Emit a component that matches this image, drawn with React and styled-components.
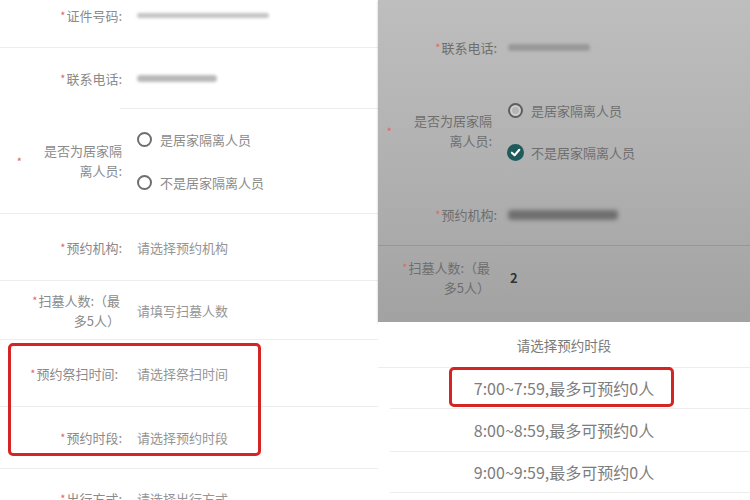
import React from 'react';
import styled, { createGlobalStyle } from 'styled-components';

const Global = createGlobalStyle`
  html, body { margin: 0; padding: 0; background: #fff; }
  body { font-family: "Noto Sans CJK SC", "Noto Sans", sans-serif; }
`;

const Page = styled.div`
  display: flex;
  width: 750px;
  height: 500px;
  overflow: hidden;
`;

const LeftPanel = styled.div`
  width: 378px;
  flex: none;
  background: #fff;
  display: flex;
  flex-direction: column;
`;

const RightPanel = styled.div`
  flex: 1;
  display: flex;
  flex-direction: column;
`;

const GrayForm = styled.div`
  height: 322px;
  flex: none;
  display: flex;
  flex-direction: column;
  background: linear-gradient(180deg, #bebebe 0%, #b0b0b0 55%, #a2a2a2 100%);
  box-shadow: 0 1px 2px rgba(0, 0, 0, 0.25);
`;

const Row = styled.div`
  display: flex;
  align-items: center;
  flex: none;
  box-sizing: border-box;
  height: ${(p) => p.$h}px;
  padding-bottom: ${(p) => p.$pb || 0}px;
`;

const Divider = styled.div`
  height: 1px;
  flex: none;
  margin-left: ${(p) => p.$indent || 0}px;
  background: ${(p) => p.$color || '#ededed'};
`;

const Label = styled.div`
  width: ${(p) => p.$w || 125}px;
  flex: none;
  box-sizing: border-box;
  padding-right: ${(p) => p.$pr || 3}px;
  display: flex;
  justify-content: flex-end;
  align-items: center;
  font-size: 13px;
  line-height: 20px;
  text-align: right;
  color: ${(p) => (p.$dim ? '#6e6e6e' : '#8a8a8a')};
`;

const LabelText = styled.span`
  max-width: ${(p) => p.$max || 99}px;
`;

const Star = styled.span`
  color: #e06666;
  font-size: 11px;
  margin-right: ${(p) => p.$gap || 1}px;
  vertical-align: 1px;
`;

const Value = styled.div`
  margin-left: ${(p) => p.$ml || 12}px;
  font-size: 13px;
  color: ${(p) => (p.$dark ? '#333' : '#959595')};
  font-weight: ${(p) => (p.$dark ? 700 : 400)};
  display: flex;
  align-items: center;
`;

const Redacted = styled.div`
  width: ${(p) => p.$w}px;
  height: ${(p) => p.$hh || 6}px;
  border-radius: 4px;
  background: ${(p) => p.$c};
  filter: blur(${(p) => p.$blur || 1.5}px);
`;

const RadioGroup = styled.div`
  margin-left: ${(p) => p.$ml || 12}px;
  display: flex;
  flex-direction: column;
  gap: ${(p) => p.$gap || 23}px;
`;

const RadioItem = styled.div`
  display: flex;
  align-items: center;
  gap: 8px;
  height: 20px;
  font-size: 13px;
  color: ${(p) => (p.$dim ? '#6e6e6e' : '#8a8a8a')};
`;

const RadioCircle = styled.span`
  width: 15px;
  height: 15px;
  box-sizing: border-box;
  border-radius: 50%;
  border: 2px solid ${(p) => p.$c || '#6f6f6f'};
  flex: none;
  ${(p) => p.$inner && `box-shadow: inset 0 0 0 2px #cfcfcf;`}
`;

const CheckedCircle = styled.span`
  width: 17px;
  height: 17px;
  border-radius: 50%;
  background: #1f5a5c;
  flex: none;
  display: flex;
  align-items: center;
  justify-content: center;
  margin-left: -1px;
  margin-right: -1px;
`;

const Group = styled.div`
  position: relative;
  display: flex;
  flex-direction: column;
`;

const Highlight = styled.div`
  position: absolute;
  left: ${(p) => p.$l}px;
  top: ${(p) => p.$t}px;
  width: ${(p) => p.$w}px;
  height: ${(p) => p.$h}px;
  box-sizing: border-box;
  border: ${(p) => p.$bw || 3}px solid #d42424;
  border-radius: 5px;
  pointer-events: none;
`;

const Picker = styled.div`
  flex: 1;
  background: #fff;
  display: flex;
  flex-direction: column;
`;

const PickerTitle = styled.div`
  height: 45px;
  flex: none;
  display: flex;
  align-items: center;
  justify-content: center;
  font-size: 13.5px;
  color: #7a7a7a;
`;

const Option = styled.div`
  position: relative;
  height: ${(p) => p.$h}px;
  flex: none;
  display: flex;
  align-items: center;
  justify-content: center;
  font-size: 16px;
  color: #7d7d7d;
`;

const Check = () => (
  <svg width="11" height="11" viewBox="0 0 12 12">
    <path d="M2 6.2 L5 9 L10.2 3" fill="none" stroke="#fff" strokeWidth="2.2" strokeLinecap="round" strokeLinejoin="round" />
  </svg>
);

export default function App() {
  return (
    <Page>
      <Global />
      <LeftPanel>
        <Row $h={47} $pb={17}>
          <Label><span><Star>*</Star>证件号码:</span></Label>
          <Value><Redacted $w={132} $hh={5} $c="#c4c4c4" /></Value>
        </Row>
        <Divider />
        <Row $h={60}>
          <Label><span><Star>*</Star>联系电话:</span></Label>
          <Value><Redacted $w={80} $hh={7} $c="#b9b9b9" /></Value>
        </Row>
        <Divider $indent={120} />
        <Row $h={104}>
          <Label>
            <Star $gap={14}>*</Star>
            <LabelText $max={86}>是否为居家隔离人员:</LabelText>
          </Label>
          <RadioGroup>
            <RadioItem><RadioCircle />是居家隔离人员</RadioItem>
            <RadioItem><RadioCircle />不是居家隔离人员</RadioItem>
          </RadioGroup>
        </Row>
        <Divider />
        <Row $h={66}>
          <Label><span><Star>*</Star>预约机构:</span></Label>
          <Value>请选择预约机构</Value>
        </Row>
        <Divider />
        <Row $h={58}>
          <Label $pr={5}><LabelText><Star>*</Star>扫墓人数:（最多5人）</LabelText></Label>
          <Value>请填写扫墓人数</Value>
        </Row>
        <Divider />
        <Group>
          <Row $h={66}>
            <Label $pr={7}><span><Star>*</Star>预约祭扫时间:</span></Label>
            <Value>请选择祭扫时间</Value>
          </Row>
          <Divider />
          <Row $h={61}>
            <Label><span><Star>*</Star>预约时段:</span></Label>
            <Value>请选择预约时段</Value>
          </Row>
          <Highlight $l={8} $t={3} $w={253} $h={113} $bw={3.5} />
        </Group>
        <Divider />
        <Row $h={58}>
          <Label><span><Star>*</Star>出行方式:</span></Label>
          <Value>请选择出行方式</Value>
        </Row>
      </LeftPanel>

      <RightPanel>
        <GrayForm>
          <Row $h={94}>
            <Label $w={122} $dim><span><Star>*</Star>联系电话:</span></Label>
            <Value $ml={8}><Redacted $w={82} $hh={7} $c="#999999" /></Value>
          </Row>
          <Row $h={90} $pb={16}>
            <Label $w={122} $dim $pr={8}>
              <Star $gap={14}>*</Star>
              <LabelText $max={86}>是否为居家隔离人员:</LabelText>
            </Label>
            <RadioGroup $ml={8} $gap={22}>
              <RadioItem $dim><RadioCircle $c="#5e5e5e" $inner />是居家隔离人员</RadioItem>
              <RadioItem $dim><CheckedCircle><Check /></CheckedCircle>不是居家隔离人员</RadioItem>
            </RadioGroup>
          </Row>
          <Row $h={61}>
            <Label $w={122} $dim><span><Star>*</Star>预约机构:</span></Label>
            <Value $ml={8}><Redacted $w={110} $hh={10} $c="#6f6f6f" $blur={2} /></Value>
          </Row>
          <Divider $color="#979797" />
          <Row $h={76} $pb={14}>
            <Label $w={122} $dim $pr={10}><LabelText><Star>*</Star>扫墓人数:（最多5人）</LabelText></Label>
            <Value $ml={10} $dark>2</Value>
          </Row>
        </GrayForm>
        <Picker>
          <PickerTitle>请选择预约时段</PickerTitle>
          <Divider />
          <Option $h={40}>
            7:00~7:59,最多可预约0人
            <Highlight $l={71} $t={-1} $w={225} $h={40} />
          </Option>
          <Divider $indent={12} />
          <Option $h={42}>8:00~8:59,最多可预约0人</Option>
          <Divider $indent={12} />
          <Option $h={40}>9:00~9:59,最多可预约0人</Option>
          <Divider $indent={12} />
        </Picker>
      </RightPanel>
    </Page>
  );
}
